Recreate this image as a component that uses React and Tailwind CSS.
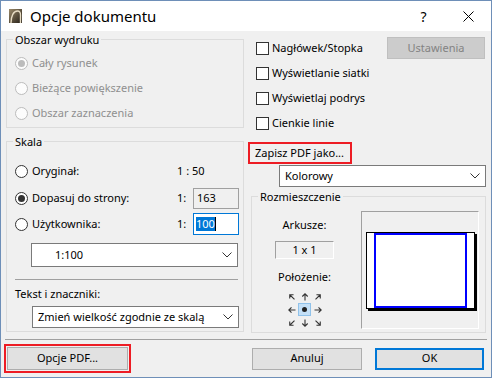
import React from 'react';

// Opcje dokumentu — Windows 10 style dialog (ArchiCAD PDF options)

function Radio({ checked, disabled }) {
  return (
    <span
      className={`flex h-[13px] w-[13px] shrink-0 items-center justify-center rounded-full border ${
        disabled ? 'border-[#bcbcbc] bg-[#fcfcfc]' : 'border-[#333333] bg-white'
      }`}
    >
      {checked && (
        <span className={`h-[7px] w-[7px] rounded-full ${disabled ? 'bg-[#bcbcbc]' : 'bg-[#333333]'}`} />
      )}
    </span>
  );
}

function Checkbox() {
  return <span className="ml-[8px] block h-[13px] w-[13px] shrink-0 border border-[#333333] bg-white" />;
}

function Chevron() {
  return (
    <svg width="10" height="6" viewBox="0 0 10 6" className="ml-auto mr-[5px] shrink-0">
      <path d="M0.5 0.5L5 5L9.5 0.5" fill="none" stroke="#333333" strokeWidth="1" />
    </svg>
  );
}

function Arrow({ angle }) {
  return (
    <svg width="8" height="8" viewBox="0 0 8 8">
      <g transform={`rotate(${angle} 4 4)`}>
        <path d="M4 7.5V0.8M1.3 3.5L4 0.8L6.7 3.5" fill="none" stroke="#333333" strokeWidth="1.1" />
      </g>
    </svg>
  );
}

function Legend({ children }) {
  return <legend className="ml-[6px] px-[2px] pt-[2px] leading-[14px]">{children}</legend>;
}

export default function App() {
  return (
    <div className="flex h-[378px] w-[492px] flex-col border border-[#6e8fb8] bg-[#f0f0f0] font-['Noto_Sans',sans-serif] text-[11px] text-black">
      {/* title bar */}
      <div className="flex h-[30px] shrink-0 items-center bg-white">
        <svg width="13" height="14" viewBox="0 0 13 14" className="ml-[8px]">
          <defs>
            <linearGradient id="ico" x1="0" y1="0" x2="1" y2="1">
              <stop offset="0" stopColor="#9c8a6a" />
              <stop offset="1" stopColor="#221d16" />
            </linearGradient>
          </defs>
          <rect width="13" height="14" fill="url(#ico)" />
          <path d="M2 14C2 7 4.5 2 8.5 2C10.5 2 11.5 3.5 11.5 6V14" fill="none" stroke="#e6dbc3" strokeWidth="1.4" />
        </svg>
        <span className="ml-[8px] text-[15px]">Opcje dokumentu</span>
        <span className="ml-auto flex h-full w-[46px] items-center justify-center pl-[3px] text-[14px]">?</span>
        <span className="flex h-full w-[46px] items-center justify-center">
          <svg width="11" height="11" viewBox="0 0 11 11">
            <path d="M0.5 0.5L10.5 10.5M10.5 0.5L0.5 10.5" stroke="#000" strokeWidth="1" />
          </svg>
        </span>
      </div>

      <div className="flex h-[308px] shrink-0">
        {/* left column */}
        <div className="w-[247px] shrink-0 pl-[5px]">
          <fieldset className="w-[238px] border border-[#dcdcdc] px-0 pb-[1px] pt-[4px]">
            <Legend>Obszar wydruku</Legend>
            {[
              ['Cały rysunek', true],
              ['Bieżące powiększenie', false],
              ['Obszar zaznaczenia', false],
            ].map(([label, on]) => (
              <div key={label} className="flex h-[25px] items-center gap-[4px] pl-[8px] text-[#8f8f8f]">
                <Radio checked={on} disabled />
                <span>{label}</span>
              </div>
            ))}
          </fieldset>

          <fieldset className="mt-[5px] w-[238px] border border-[#dcdcdc] px-0 pb-[3px] pt-[9px]">
            <Legend>Skala</Legend>
            <div className="flex h-[27px] items-center pl-[8px]">
              <div className="flex w-[162px] items-center gap-[4px]">
                <Radio />
                <span>Oryginał:</span>
              </div>
              <span>1 : 50</span>
            </div>
            <div className="flex h-[26px] items-center pl-[8px]">
              <div className="flex w-[162px] items-center gap-[4px]">
                <Radio checked />
                <span>Dopasuj do strony:</span>
              </div>
              <span className="w-[16px]">1:</span>
              <div className="flex h-[21px] w-[46px] items-center border border-[#a0a0a0] bg-[#f0f0f0] pl-[3px]">163</div>
            </div>
            <div className="flex h-[26px] items-center pl-[8px]">
              <div className="flex w-[162px] items-center gap-[4px]">
                <Radio />
                <span>Użytkownika:</span>
              </div>
              <span className="w-[16px]">1:</span>
              <div className="flex h-[22px] w-[46px] items-center border border-[#0078d7] bg-white pl-[2px]">
                <span className="h-[14px] bg-[#0078d7] leading-[14px] text-white">100</span>
                <span className="h-[14px] w-px bg-black" />
              </div>
            </div>
            <div className="ml-[24px] mt-[6px] flex h-[24px] w-[207px] items-center border border-[#7a7a7a] bg-white pl-[23px]">
              <span>1:100</span>
              <Chevron />
            </div>
            <div className="ml-[8px] mt-[12px] h-px w-[223px] bg-[#a0a0a0]" />
            <div className="mt-[6px] pl-[8px] leading-[16px]">Tekst i znaczniki:</div>
            <div className="ml-[25px] mt-[4px] flex h-[22px] w-[207px] items-center border border-[#7a7a7a] bg-white pl-[5px]">
              <span>Zmień wielkość zgodnie ze skalą</span>
              <Chevron />
            </div>
          </fieldset>
        </div>

        {/* right column */}
        <div className="w-[238px] shrink-0 pt-[4px]">
          <div className="flex h-[26px] items-center">
            <Checkbox />
            <span className="ml-[3px]">Nagłówek/Stopka</span>
            <div className="ml-auto mr-[1px] flex h-[22px] w-[98px] items-center justify-center border border-[#bfbfbf] bg-[#cccccc] text-[#838383]">
              Ustawienia
            </div>
          </div>
          {['Wyświetlanie siatki', 'Wyświetlaj podrys', 'Cienkie linie'].map((label) => (
            <div key={label} className="flex h-[25px] items-center">
              <Checkbox />
              <span className="ml-[3px]">{label}</span>
            </div>
          ))}

          <div className="mt-[6px] flex h-[22px] w-[104px] items-center border-2 border-[#ed1c24] pl-[5px]">
            Zapisz PDF jako...
          </div>
          <div className="ml-[31px] mt-[1px] flex h-[22px] w-[207px] items-center border border-[#7a7a7a] bg-white pl-[5px]">
            <span>Kolorowy</span>
            <Chevron />
          </div>

          <fieldset className="ml-[3px] mt-[1px] w-[235px] border border-[#dcdcdc] px-0 pb-[3px] pt-[7px]">
            <Legend>Rozmieszczenie</Legend>
            <div className="flex">
              <div className="flex w-[109px] shrink-0 flex-col items-center pr-[4px]">
                <div className="mt-[6px] leading-[16px]">Arkusze:</div>
                <div className="mt-[8px] flex h-[18px] w-[59px] items-center justify-center border border-[#a0a0a0] border-b-white border-r-white">
                  1 x 1
                </div>
                <div className="mt-[10px] leading-[16px]">Położenie:</div>
                <div className="mt-[5px] grid grid-cols-[13px_13px_13px] grid-rows-[13px_13px_13px]">
                  <span className="flex items-center justify-center"><Arrow angle={-45} /></span>
                  <span className="flex items-center justify-center"><Arrow angle={0} /></span>
                  <span className="flex items-center justify-center"><Arrow angle={45} /></span>
                  <span className="flex items-center justify-center"><Arrow angle={-90} /></span>
                  <span className="flex items-center justify-center border border-[#90c2ea] bg-[#c4e0f7]">
                    <span className="h-[5px] w-[5px] rounded-full bg-[#222222]" />
                  </span>
                  <span className="flex items-center justify-center"><Arrow angle={90} /></span>
                  <span className="flex items-center justify-center"><Arrow angle={-135} /></span>
                  <span className="flex items-center justify-center"><Arrow angle={180} /></span>
                  <span className="flex items-center justify-center"><Arrow angle={135} /></span>
                </div>
              </div>
              <div className="flex h-[118px] w-[118px] shrink-0 items-center justify-center border border-[#a0a0a0] border-b-white border-r-white">
                <div className="flex h-[77px] w-[109px] border border-black bg-white pl-[7px] shadow-[2px_2px_0_#000]">
                  <div className="h-full w-[93px] border-2 border-[#0000ff]" />
                </div>
              </div>
            </div>
          </fieldset>
        </div>
      </div>

      <div className="ml-[4px] h-px w-[482px] shrink-0 bg-[#a0a0a0]" />

      <div className="mt-[4px] flex items-center">
        <div className="ml-[3px] border-2 border-[#ed1c24] p-px">
          <div className="flex h-[23px] w-[121px] items-center justify-center border border-[#adadad] bg-[#e1e1e1]">
            Opcje PDF...
          </div>
        </div>
        <div className="ml-[121px] flex h-[22px] w-[110px] items-center justify-center border border-[#adadad] bg-[#e1e1e1]">
          Anuluj
        </div>
        <div className="ml-[13px] flex h-[22px] w-[109px] items-center justify-center border-2 border-[#0078d7] bg-[#e1e1e1]">
          OK
        </div>
      </div>
    </div>
  );
}
